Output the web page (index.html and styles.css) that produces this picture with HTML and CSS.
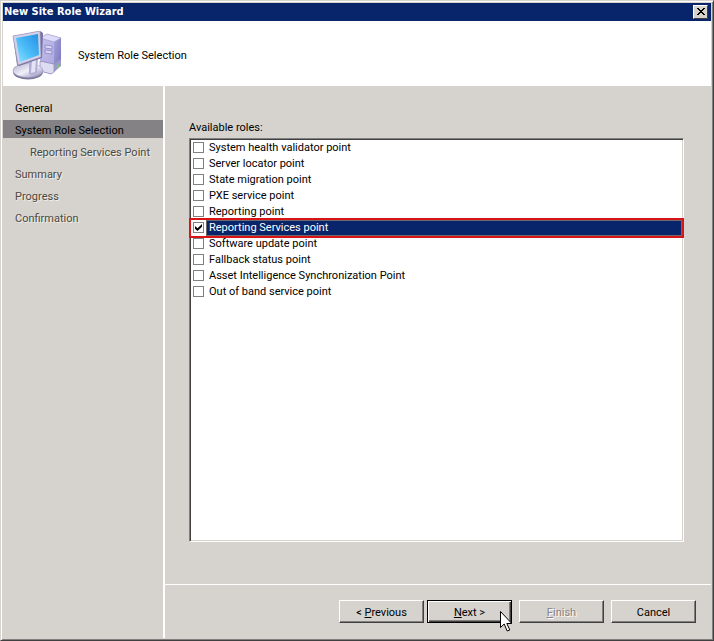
FILE: index.html
```html
<!DOCTYPE html>
<html lang="en">
<head>
<meta charset="utf-8">
<title>New Site Role Wizard</title>
<link rel="stylesheet" href="styles.css">
</head>
<body>
<div class="window">
  <header class="titlebar">
    <h1 class="title">New Site Role Wizard</h1>
    <button class="close" type="button" aria-label="Close">
      <svg width="10" height="8" viewBox="0 0 10 8" shape-rendering="crispEdges"><path d="M1 0h2v1h1v1h2v-1h1v-1h2v1h-1v1h-1v1h-1v1h1v1h1v1h1v1h-2v-1h-1v-1h-2v1h-1v1h-2v-1h1v-1h1v-1h1v-1h-1v-1h-1v-1h-1z"/></svg>
    </button>
  </header>
  <div class="banner">
    <svg class="computer" width="52" height="50" viewBox="0 0 52 50" aria-hidden="true">
      <defs>
        <linearGradient id="screen" x1="0" y1="1" x2="1" y2="0"><stop offset="0" stop-color="#8be4ff"/><stop offset=".45" stop-color="#4bbcf8"/><stop offset="1" stop-color="#258ee2"/></linearGradient>
        <linearGradient id="side" x1="0" y1="0" x2="1" y2="1"><stop offset="0" stop-color="#c4c1ec"/><stop offset="1" stop-color="#a5a1dc"/></linearGradient>
        <linearGradient id="front" x1="0" y1="0" x2="1" y2="1"><stop offset="0" stop-color="#a6a2de"/><stop offset="1" stop-color="#7672b8"/></linearGradient>
        <linearGradient id="base" x1="0" y1="0" x2="1" y2="1"><stop offset="0" stop-color="#b3b1cb"/><stop offset=".5" stop-color="#f0effa"/><stop offset="1" stop-color="#8783ae"/></linearGradient>
      </defs>
      <path d="M28 7l7-4 14 4v27l-10 9-11-3z" fill="url(#side)"/>
      <path d="M42 11l7-4v27l-7 7z" fill="url(#front)"/>
      <path d="M28 7l7-4 14 4-7 4z" fill="#dddbf8" stroke="#9894ca" stroke-width=".6"/>
      <path d="M33 14l7 1v3l-7-1zM33 19l7 1v3l-7-1z" fill="#dad8f5" stroke="#7f7bc0" stroke-width=".7"/>
      <path d="M28 30l14 3v8l-3 2-11-3z" fill="#dedcf3" stroke="#75719f" stroke-width=".6"/>
      <path d="M42 33l7-5v7l-7 6z" fill="#9c99c4"/>
      <path d="M45 35l2-2v3l-2 2z" fill="#76cf70"/>
      <ellipse cx="16" cy="41" rx="15" ry="7.500" fill="#7d799d"/>
      <ellipse cx="16" cy="39.500" rx="15" ry="7" fill="url(#base)" stroke="#9995b8" stroke-width=".6"/>
      <path d="M17 30l9-2-1 13q-3 4-8 2z" fill="#b0aed6"/>
      <path d="M20 30l4-1-1 12-4 1z" fill="#e5e4f6"/>
      <path d="M1 5L28 0l3 2-1 25L7 35l-2-1z" fill="#7571a0"/>
      <path d="M1 5L28 0l1 26L6 34z" fill="#d3d1e8" stroke="#9793bd" stroke-width=".6"/>
      <path d="M4 7l22-4 1 21L8 31z" fill="url(#screen)"/>
    </svg>
    <h2 class="heading">System Role Selection</h2>
  </div>
  <div class="body">
    <nav class="steps" aria-label="Wizard steps">
      <ol class="step-list">
        <li class="step">General</li>
        <li class="step current" aria-current="step">System Role Selection</li>
        <li class="step pending nested">Reporting Services Point</li>
        <li class="step pending">Summary</li>
        <li class="step pending">Progress</li>
        <li class="step pending">Confirmation</li>
      </ol>
    </nav>
    <div class="main">
      <fieldset class="page">
        <legend class="caption">Available roles:</legend>
        <div class="roles">
          <label class="role"><input type="checkbox"><span class="name">System health validator point</span></label>
          <label class="role"><input type="checkbox"><span class="name">Server locator point</span></label>
          <label class="role"><input type="checkbox"><span class="name">State migration point</span></label>
          <label class="role"><input type="checkbox"><span class="name">PXE service point</span></label>
          <label class="role"><input type="checkbox"><span class="name">Reporting point</span></label>
          <label class="role selected"><input type="checkbox" checked><span class="name">Reporting Services point</span></label>
          <label class="role"><input type="checkbox"><span class="name">Software update point</span></label>
          <label class="role"><input type="checkbox"><span class="name">Fallback status point</span></label>
          <label class="role"><input type="checkbox"><span class="name">Asset Intelligence Synchronization Point</span></label>
          <label class="role"><input type="checkbox"><span class="name">Out of band service point</span></label>
        </div>
      </fieldset>
      <footer class="actions">
        <div class="pair">
          <button class="button" type="button">&lt; <u>P</u>revious</button>
          <div class="next">
            <button class="button default" type="button"><u>N</u>ext &gt;</button>
            <svg class="pointer" width="12" height="21" viewBox="0 0 12 21" aria-hidden="true"><path d="M.5.5v16l3.700-3.500 3 7 2.600-1-3-6.500h5z" fill="#fff" stroke="#000"/></svg>
          </div>
        </div>
        <button class="button" type="button" disabled><u>F</u>inish</button>
        <button class="button" type="button">Cancel</button>
      </footer>
    </div>
  </div>
</div>
</body>
</html>
```
FILE: styles.css
```css
* {
  box-sizing: border-box;
}

body {
  margin: 0;
  background: #d6d3ce;
  color: #000;
  font: 11px/16px Tahoma, Roboto, sans-serif;
}

.window {
  display: flex;
  flex-direction: column;
  min-height: 100vh;
  padding: 2px;
  border: 1px solid #d6d3ce;
  border-right-color: #404040;
  border-bottom-color: #404040;
  box-shadow: inset 1px 1px #fff, inset -1px -1px #808080;
}

.titlebar {
  display: flex;
  align-items: center;
  justify-content: space-between;
  height: 18px;
  padding: 0 3px 0 1px;
  background: #08246b;
  color: #fff;
}

.title {
  margin: 0;
  font: bold 11px/16px Tahoma, "DejaVu Sans Condensed", sans-serif;
}

.close {
  display: flex;
  align-items: center;
  justify-content: center;
  width: 15px;
  height: 14px;
  padding: 0;
  border: 1px solid;
  border-color: #fff #404040 #404040 #fff;
  background: #d6d3ce;
}

.banner {
  display: flex;
  align-items: center;
  gap: 14px;
  height: 65px;
  padding: 4px 9px 0;
  background: #fff;
}

.heading {
  margin: 0;
  font-size: 11px;
  font-weight: normal;
}

.body {
  display: flex;
  flex: 1;
}

.steps {
  flex: none;
  width: 162px;
  padding-top: 12px;
  border-right: 2px solid #fff;
}

.step-list {
  display: flex;
  flex-direction: column;
  gap: 4px;
  margin: 0;
  padding: 0;
  list-style: none;
}

.step {
  padding: 4px 12px 0;
  line-height: 14px;
}

.current {
  background: #848284;
}

.pending {
  color: #4c4942;
  text-shadow: 1px 1px #efede8;
}

.nested {
  padding-left: 27px;
}

.main {
  display: flex;
  flex: 1;
  flex-direction: column;
}

.page {
  display: flex;
  flex: 1;
  flex-direction: column;
  min-width: 0;
  margin: 0;
  padding: 0 27px 42px 24px;
  border: 0;
}

.caption {
  padding: 34px 0 2px;
}

.roles {
  flex: 1;
  border: 1px solid;
  border-color: #808080 #fff #fff #808080;
  padding: 1px;
  background: #fff;
  box-shadow: inset 1px 1px #404040, inset -1px -1px #d6d3ce;
}

.role {
  position: relative;
  display: flex;
  align-items: flex-start;
  height: 16px;
  padding-left: 2px;
}

.role input {
  flex: none;
  appearance: none;
  width: 11px;
  height: 11px;
  margin: 2px 2px 0 0;
  border: 1px solid #808080;
  background: #fff;
}

.role input:checked::before {
  content: "";
  display: block;
  width: 7px;
  height: 7px;
  margin: 1px;
  background: #000;
  clip-path: polygon(0 28%, 36% 60%, 100% 0, 100% 40%, 36% 100%, 0 68%);
}

.name {
  flex: 1;
  padding-left: 3px;
}

.selected .name {
  background: #08246b;
  box-shadow: inset 0 0 0 1px #6b6a70;
  color: #fff;
}

.selected::after {
  content: "";
  position: absolute;
  inset: -2px;
  border: 2px solid #d81414;
}

.actions {
  display: flex;
  justify-content: flex-end;
  gap: 7px;
  padding: 15px;
  border-top: 1px solid #fff;
}

.pair {
  display: flex;
  gap: 3px;
}

.next {
  position: relative;
}

.button {
  display: block;
  width: 85px;
  height: 23px;
  padding: 2px 0 0;
  border: 1px solid;
  border-color: #fff #404040 #404040 #fff;
  background: #d6d3ce;
  box-shadow: inset -1px -1px #808080;
  color: #000;
  font: inherit;
}

.default {
  border-color: #000;
  box-shadow: inset 1px 1px #fff, inset -1px -1px #404040, inset -2px -2px #808080;
}

.button:disabled {
  color: #848284;
  text-shadow: 1px 1px #fff;
}

.pointer {
  position: absolute;
  top: 11px;
  left: 73px;
}
```
